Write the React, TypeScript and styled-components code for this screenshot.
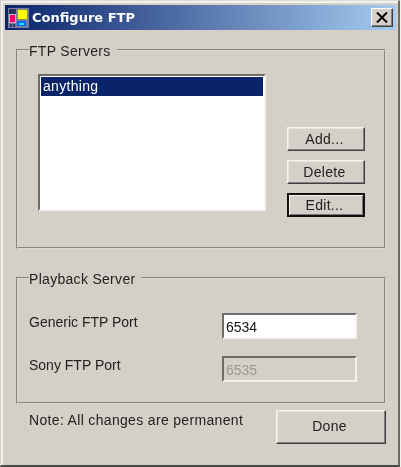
import React from "react";
import styled, { createGlobalStyle, css } from "styled-components";

const Global = createGlobalStyle`
  html, body { margin: 0; padding: 0; background: #f2f1ee; }
  body { font-family: "Liberation Sans", Arial, sans-serif; font-size: 14px; color: #222; }
  * { box-sizing: border-box; }
`;

const Frame = styled.div`
  width: 400px;
  height: 467px;
  background: #d4d0c8;
  border-top: 1px solid #dedcd6;
  border-left: 1px solid #d4d0c8;
  border-right: 2px solid #6d6b67;
  border-bottom: 2px solid #4a4a48;
  box-shadow: inset 2px 2px 0 #f2f1ee;
  padding: 4px 2px 0 4px;
  display: flex;
  flex-direction: column;
  filter: blur(0.35px);
`;

const TitleBar = styled.div`
  height: 25px;
  flex: none;
  display: flex;
  align-items: center;
  padding: 0 3px 0 3px;
  background: linear-gradient(90deg, #0a246a 0%, #a6caf0 100%);
`;

const TitleText = styled.span`
  font-family: "DejaVu Sans", Verdana, sans-serif;
  font-weight: 700;
  font-size: 13px;
  color: #fff;
  margin-left: 3px;
  flex: 1;
`;

const CloseButton = styled.button`
  width: 22px;
  height: 19px;
  padding: 0;
  background: #d4d0c8;
  border: 1px solid;
  border-color: #fff #404040 #404040 #fff;
  box-shadow: inset -1px -1px 0 #808080;
  display: flex;
  align-items: center;
  justify-content: center;
`;

const Content = styled.div`
  flex: 1;
  display: flex;
  flex-direction: column;
  padding: 9px 10px 0 11px;
`;

const Group = styled.fieldset<{ $h: number; $gap?: number }>`
  margin: ${(p) => p.$gap ?? 0}px 0 0;
  padding: 0;
  height: ${(p) => p.$h}px;
  flex: none;
  border: 2px groove #dcd8d0;
  min-width: 0;
`;

const Legend = styled.legend`
  margin-left: 11px;
  padding: 4px 6px 1px 0;
  font-size: 14px;
  line-height: 17px;
  letter-spacing: 0.3px;
`;

const ServersRow = styled.div`
  display: flex;
  padding: 13px 0 0 20px;
`;

const ListBox = styled.div`
  width: 228px;
  height: 137px;
  background: #fff;
  border: 2px solid;
  border-color: #6f6d69 #f3f2ef #f3f2ef #6f6d69;
  padding: 1px;
`;

const ListItem = styled.div<{ $selected?: boolean }>`
  height: 19px;
  padding-left: 2px;
  line-height: 19px;
  font-size: 14px;
  letter-spacing: 0.3px;
  ${(p) => p.$selected && css`background: #0a246a; color: #fff;`}
`;

const Buttons = styled.div`
  display: flex;
  flex-direction: column;
  gap: 9px;
  margin: 53px 0 0 21px;
`;

const Button = styled.button<{ $default?: boolean }>`
  width: 78px;
  height: 24px;
  padding: 0 3px 0 0;
  font: inherit;
  font-size: 14px;
  letter-spacing: 0.3px;
  color: #222;
  background: #d4d0c8;
  border: 1px solid;
  border-color: #f4f3f0 #404040 #404040 #f4f3f0;
  box-shadow: inset -1px -1px 0 #808080, inset 1px 1px 0 #e6e4df;
  ${(p) => p.$default && css`
    border: 2px solid #111;
    box-shadow: inset 1px 1px 0 #f4f3f0, inset -1px -1px 0 #777;
  `}
`;

const PortRow = styled.div<{ $top: number }>`
  display: flex;
  align-items: center;
  margin-top: ${(p) => p.$top}px;
  padding-left: 11px;
`;

const PortLabel = styled.span`
  width: 193px;
  position: relative;
  top: -4px;
`;

const PortInput = styled.div<{ $disabled?: boolean }>`
  width: 135px;
  height: 26px;
  padding: 1px 0 0 2px;
  line-height: 22px;
  font-size: 14px;
  background: ${(p) => (p.$disabled ? "#d4d0c8" : "#fff")};
  color: ${(p) => (p.$disabled ? "#9a9894" : "#111")};
  border: 2px solid;
  border-color: #6f6d69 #f3f2ef #f3f2ef #6f6d69;
`;

const Footer = styled.div`
  display: flex;
  justify-content: space-between;
  padding-left: 13px;
  margin-top: 6px;
`;

const Note = styled.span`
  padding-top: 2px;
  letter-spacing: 0.33px;
`;

const DoneButton = styled(Button)`
  width: 110px;
  height: 34px;
  padding-bottom: 2px;
`;

const AppIcon = () => (
  <svg width="21" height="20" viewBox="0 0 21 20" shapeRendering="crispEdges">
    <rect width="21" height="20" fill="#76809a" />
    <rect x="1" y="1" width="7" height="5" fill="#2a3560" />
    <rect x="9" y="1" width="11" height="11" fill="#8c8a60" />
    <rect x="10" y="2" width="9" height="9" fill="#ffff00" />
    <rect x="1" y="6" width="7" height="9" fill="#b8bcc8" />
    <rect x="2" y="7" width="5" height="7" fill="#f0006a" />
    <rect x="9" y="13" width="9" height="5" fill="#0a6cff" />
    <rect x="11" y="15" width="5" height="2" fill="#20e0ff" />
    <rect x="2" y="16" width="2" height="3" fill="#2a3560" />
    <rect x="5" y="16" width="2" height="3" fill="#2a3560" />
  </svg>
);

const CloseIcon = () => (
  <svg width="12" height="11" viewBox="0 0 12 11">
    <path d="M1 0.5 L11 10.5 M11 0.5 L1 10.5" stroke="#000" strokeWidth="2" fill="none" />
  </svg>
);

export default function App() {
  return (
    <>
      <Global />
      <Frame>
        <TitleBar>
          <AppIcon />
          <TitleText>Configure FTP</TitleText>
          <CloseButton aria-label="Close"><CloseIcon /></CloseButton>
        </TitleBar>
        <Content>
          <Group $h={210}>
            <Legend>FTP Servers</Legend>
            <ServersRow>
              <ListBox>
                <ListItem $selected>anything</ListItem>
              </ListBox>
              <Buttons>
                <Button>Add...</Button>
                <Button>Delete</Button>
                <Button $default>Edit...</Button>
              </Buttons>
            </ServersRow>
          </Group>
          <Group $h={137} $gap={18}>
            <Legend>Playback Server</Legend>
            <PortRow $top={24}>
              <PortLabel>Generic FTP Port</PortLabel>
              <PortInput>6534</PortInput>
            </PortRow>
            <PortRow $top={17}>
              <PortLabel>Sony FTP Port</PortLabel>
              <PortInput $disabled>6535</PortInput>
            </PortRow>
          </Group>
          <Footer>
            <Note>Note: All changes are permanent</Note>
            <DoneButton>Done</DoneButton>
          </Footer>
        </Content>
      </Frame>
    </>
  );
}
